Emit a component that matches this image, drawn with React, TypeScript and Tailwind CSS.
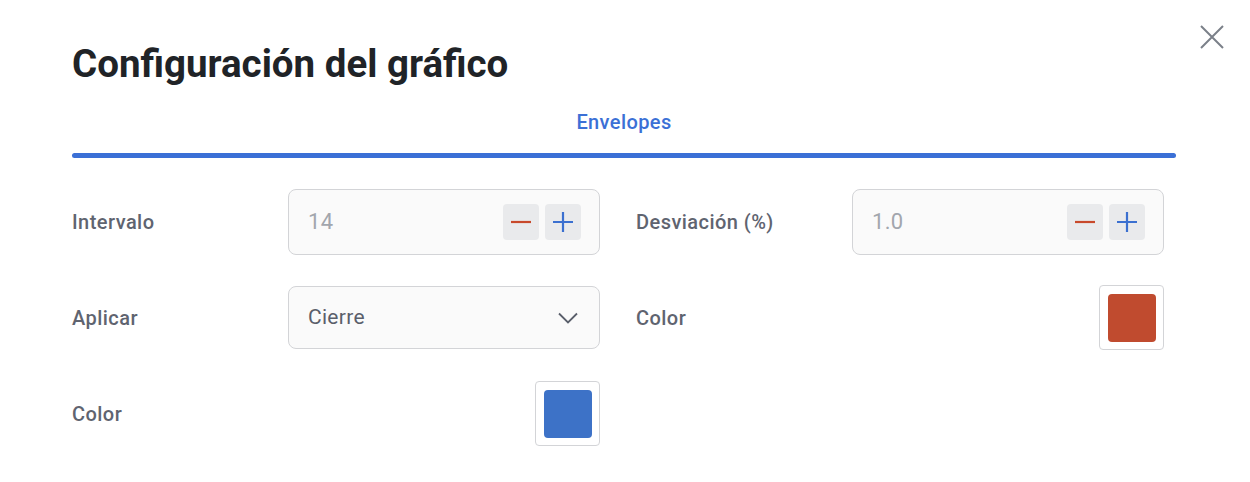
import React, { useState } from 'react';

const Stepper: React.FC<{ value: string }> = ({ value }) => (
  <div className="flex items-center justify-between w-[312px] h-[66px] rounded-lg border border-[#d3d4d7] bg-[#fafafa] pl-[19px] pr-[18px]">
    <span className="text-[22px] text-[#a2a6ad] tracking-[0.3px]">{value}</span>
    <div className="flex items-center gap-[6px]">
      <button className="w-9 h-9 rounded bg-[#e9eaec] flex items-center justify-center">
        <svg width="20" height="20" viewBox="0 0 20 20">
          <path d="M0 10h20" stroke="#c8492b" strokeWidth="2.2" />
        </svg>
      </button>
      <button className="w-9 h-9 rounded bg-[#e9eaec] flex items-center justify-center">
        <svg width="20" height="20" viewBox="0 0 20 20">
          <path d="M0 10h20M10 0v20" stroke="#3b70d0" strokeWidth="2.2" />
        </svg>
      </button>
    </div>
  </div>
);

const Swatch: React.FC<{ color: string }> = ({ color }) => (
  <div className="w-[65px] h-[65px] border border-[#d3d4d7] rounded-sm bg-white flex items-center justify-center">
    <div className={`w-12 h-12 rounded ${color}`}></div>
  </div>
);

const Field: React.FC<{ label: string; children: React.ReactNode }> = ({ label, children }) => (
  <div className="flex items-center justify-between h-[65px]">
    <span className="text-[20px] font-medium text-[#5f6470] tracking-[0.45px]">{label}</span>
    {children}
  </div>
);

const App: React.FC = () => {
  const [tab] = useState('Envelopes');

  return (
    <div className="relative w-[1250px] h-[482px] bg-white px-[72px] pt-[40px]" style={{ fontFamily: 'Roboto, "Liberation Sans", sans-serif' }}>
      <button className="absolute top-[25px] left-[1200px]" aria-label="Cerrar">
        <svg width="24" height="24" viewBox="0 0 24 24">
          <path d="M1 1L23 23M23 1L1 23" stroke="#7b8089" strokeWidth="2" />
        </svg>
      </button>

      <h1 className="text-[38.5px] leading-[48px] font-bold text-[#202327]">Configuración del gráfico</h1>

      {/* Tabs */}
      <div className="w-[1104px] mt-[20px]">
        <div className="text-center text-[20px] font-medium text-[#3b70d6] leading-[28px] tracking-[0.4px]">{tab}</div>
        <div className="mt-[17px] h-[5px] rounded-full bg-[#3b70d6]"></div>
      </div>

      <div className="grid grid-cols-2 gap-x-9 gap-y-[31px] w-[1092px] mt-[31px]">
        <Field label="Intervalo">
          <Stepper value="14" />
        </Field>
        <Field label="Desviación (%)">
          <Stepper value="1.0" />
        </Field>
        <Field label="Aplicar">
          <div className="flex items-center justify-between w-[312px] h-[63px] rounded-lg border border-[#d3d4d7] bg-[#fafafa] pl-[19px] pr-[21px]">
            <span className="text-[21px] text-[#5a5f6b] tracking-[0.3px]">Cierre</span>
            <svg width="20" height="12" viewBox="0 0 20 12">
              <path d="M1 1.5L10 10.5L19 1.5" fill="none" stroke="#5a5f6b" strokeWidth="1.8" />
            </svg>
          </div>
        </Field>
        <Field label="Color">
          <Swatch color="bg-[#c04b2f]" />
        </Field>
        <Field label="Color">
          <Swatch color="bg-[#3d72c7]" />
        </Field>
      </div>
    </div>
  );
};

export default App;
